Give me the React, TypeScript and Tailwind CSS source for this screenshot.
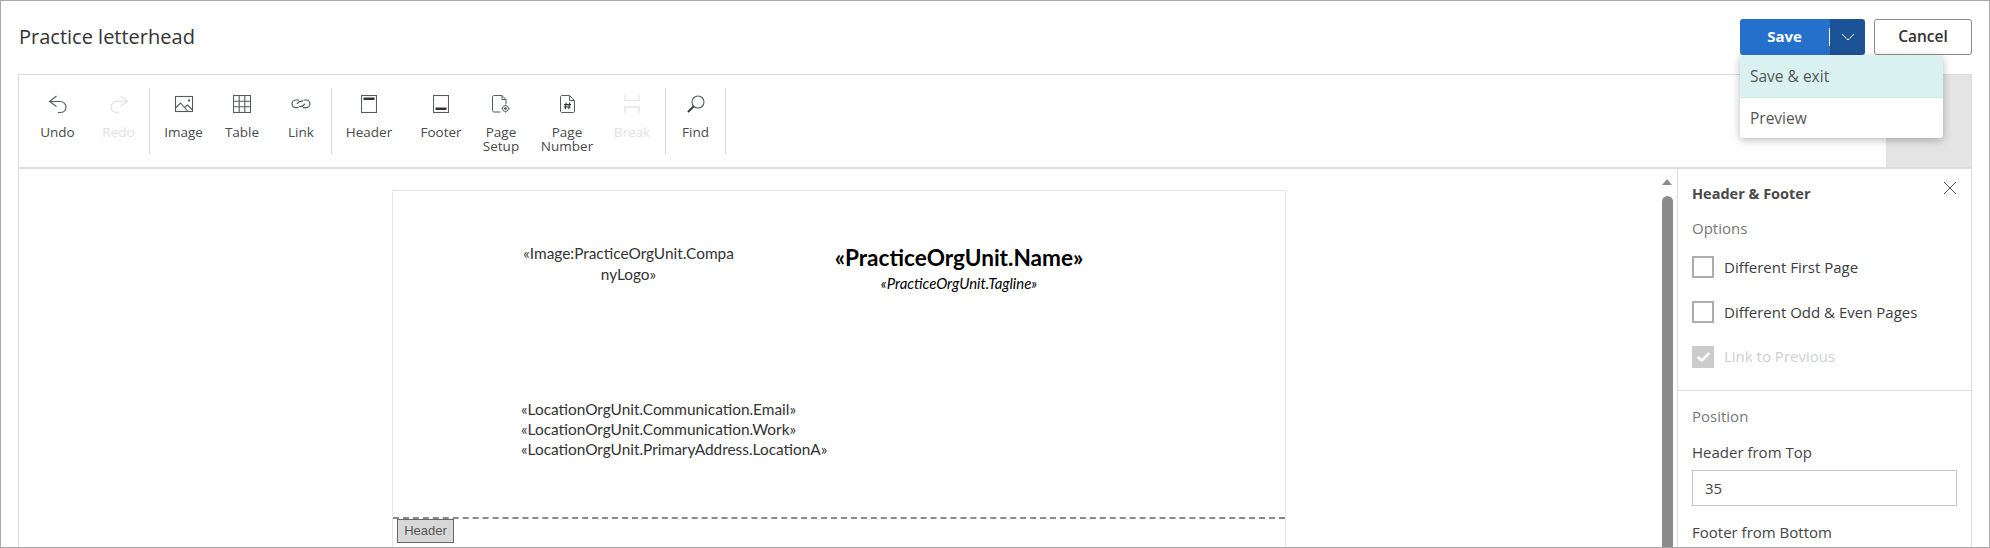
import React from 'react'
import { Check } from 'lucide-react'

const stroke = '#555b61'

const icons: Record<string, React.ReactNode> = {
  undo: (
    <svg width="20" height="20" viewBox="0 0 20 20" fill="none" stroke={stroke} strokeWidth="1.1">
      <path d="M8.5 2 L1.5 7.5 L8.5 12.5" />
      <path d="M1.5 7.5 H12 C15.5 7.5 18 10 18 13.2 C18 16.4 15.5 18.5 12 18.5 H10" />
    </svg>
  ),
  redo: (
    <svg width="20" height="20" viewBox="0 0 20 20" fill="none" stroke="#e4e4e4" strokeWidth="1.4">
      <path d="M11.5 2 L18.5 7.5 L11.5 12.5" />
      <path d="M18.5 7.5 H8 C4.5 7.5 2 10 2 13.2 C2 16.4 4.5 18.5 8 18.5 H10" />
    </svg>
  ),
  image: (
    <svg width="20" height="18" viewBox="0 0 20 18" fill="none" stroke={stroke} strokeWidth="1.1">
      <rect x="1.5" y="1.5" width="17" height="15" />
      <path d="M1.5 13 L6.5 8 L14 16.5 M10.5 12.5 L13.5 10 L18.5 15" />
      <circle cx="15" cy="5.5" r="0.6" />
    </svg>
  ),
  table: (
    <svg width="18" height="18" viewBox="0 0 18 18" fill="none" stroke={stroke} strokeWidth="1.1">
      <rect x="0.5" y="0.5" width="17" height="17" />
      <path d="M6.2 0.5 V17.5 M11.8 0.5 V17.5 M0.5 6.2 H17.5 M0.5 11.8 H17.5" />
    </svg>
  ),
  link: (
    <svg width="20" height="12" viewBox="0 0 20 12" fill="none" stroke={stroke} strokeWidth="1.2">
      <path d="M8 2 H5 C2.8 2 1 3.6 1 5.8 C1 8 2.8 9.6 5 9.6 H7.5" />
      <path d="M12 9.6 H15 C17.2 9.6 19 8 19 5.8 C19 3.6 17.2 2 15 2 H12.5" />
      <path d="M6 5.8 C7.5 3.5 10 3 12 3.2 M14 5.8 C12.5 8 10 8.8 8 8.4" />
    </svg>
  ),
  header: (
    <svg width="16" height="18" viewBox="0 0 16 18" fill="none" stroke={stroke} strokeWidth="1.1">
      <rect x="0.5" y="0.5" width="15" height="17" />
      <rect x="2.5" y="2.5" width="11" height="2.5" fill="#333" stroke="none" />
    </svg>
  ),
  footer: (
    <svg width="16" height="18" viewBox="0 0 16 18" fill="none" stroke={stroke} strokeWidth="1.1">
      <rect x="0.5" y="0.5" width="15" height="17" />
      <rect x="2.5" y="12.5" width="11" height="2.5" fill="#333" stroke="none" />
    </svg>
  ),
  setup: (
    <svg width="18" height="18" viewBox="0 0 18 18" fill="none" stroke={stroke} strokeWidth="1">
      <path d="M8.5 17 H2 C1 17 0.5 16.4 0.5 15.5 V2 C0.5 1 1 0.5 2 0.5 H10 L14 4.5 V9" />
      <path d="M10 0.5 V4.5 H14" />
      <circle cx="13.5" cy="13.5" r="3" />
      <circle cx="13.5" cy="13.5" r="1" fill={stroke} />
      <path d="M13.5 9.5 V10.5 M13.5 16.5 V17.5 M9.5 13.5 H10.5 M16.5 13.5 H17.5" />
    </svg>
  ),
  number: (
    <svg width="15" height="18" viewBox="0 0 15 18" fill="none" stroke={stroke} strokeWidth="1">
      <path d="M9.5 0.5 H2 C1 0.5 0.5 1 0.5 2 V16 C0.5 17 1 17.5 2 17.5 H13 C14 17.5 14.5 17 14.5 16 V5.5 Z" />
      <path d="M9.5 0.5 V5.5 H14.5" />
      <path d="M6.2 7.5 L5.4 14 M9.6 7.5 L8.8 14 M4 9.6 H11 M3.6 12 H10.6" strokeWidth="1.1" stroke="#333" />
    </svg>
  ),
  pageBreak: (
    <svg width="16" height="18" viewBox="0 0 16 18" fill="none" stroke="#e4e4e4" strokeWidth="1.4">
      <path d="M1 0 V5.5 H15 V0 M1 18 V12 H15 V18" />
    </svg>
  ),
  find: (
    <svg width="18" height="18" viewBox="0 0 18 18" fill="none" stroke={stroke} strokeWidth="1.1">
      <circle cx="11" cy="7" r="6" />
      <path d="M6.6 11.4 L1 17" strokeWidth="2" stroke="#333" />
    </svg>
  ),
}

const ToolButton = ({
  icon,
  label,
  width,
  disabled
}: {
  icon: string
  label: string[]
  width: string
  disabled?: boolean
}) => (
  <button
    className={`${width} flex flex-col items-center pt-[7px] text-[13.5px] leading-[14px] ${
      disabled ? 'text-[#e2e2e2]' : 'text-[#4a4a4a]'
    }`}
  >
    <span className="h-[18px] flex items-center justify-center">{icons[icon]}</span>
    <span className="mt-[12px]">
      {label.map(line => (
        <span key={line} className="block">
          {line}
        </span>
      ))}
    </span>
  </button>
)

const Divider = () => <div className="w-px h-[66px] bg-[#d9d9d9]" />

const CheckRow = ({ label }: { label: string }) => (
  <label className="flex items-center h-[22px] gap-[10px] text-[15px] text-[#3c3c3c]">
    <span className="w-[22px] h-[22px] border-2 border-[#adadad] bg-white" />
    {label}
  </label>
)

export default function App() {
  return (
    <div className="relative h-[548px] overflow-hidden border border-[#a8a8a8] bg-white pr-[17px] font-['Open_Sans',sans-serif]">
      {/* Top bar */}
      <div className="flex items-center justify-between h-[73px] pl-[18px] pb-[3px] pt-[1px]">
        <h1 className="text-[20px] text-[#333]">Practice letterhead</h1>
        <div className="flex gap-[9px]">
          <div className="relative flex w-[125px] h-[36px] rounded-[3px] overflow-hidden text-white text-[15px] font-bold">
            <button className="w-[90px] bg-[#2470cb] pr-[1px]">Save</button>
            <button className="flex-1 bg-[#1c5296] flex items-center justify-center">
              <svg width="14" height="8" viewBox="0 0 14 8" fill="none" stroke="#fff" strokeWidth="1">
                <path d="M1 1 L7 7 L13 1" />
              </svg>
            </button>
            <span className="absolute left-[89px] top-[9px] w-px h-[18px] bg-white" />
          </div>
          <button className="w-[98px] h-[36px] rounded-[3px] border border-[#8c8c8c] bg-white text-[15.5px] font-semibold text-[#333]">
            Cancel
          </button>
        </div>
      </div>

      {/* Save menu */}
      <div className="absolute z-10 left-[1739px] top-[55px] w-[203px] h-[82px] rounded-b-[3px] bg-white shadow-[0_2px_8px_rgba(0,0,0,0.28)] text-[15.5px] text-[#555] overflow-hidden">
        <div className="h-[42px] flex items-center px-[10px] bg-[#d9f2f1] border-b border-[#d3e8e6]">Save &amp; exit</div>
        <div className="h-[40px] flex items-center px-[10px] pt-[2px]">Preview</div>
      </div>

      <div className="ml-[17px] h-[474px] border border-[#dcdcdc] border-b-0">
        {/* Toolbar */}
        <div className="flex h-[94px] border-b-2 border-[#dedede]">
          <div className="flex items-start pt-[13px] pl-[8px]">
            <ToolButton icon="undo" label={['Undo']} width="w-[61px]" />
            <ToolButton icon="redo" label={['Redo']} width="w-[61px]" disabled />
            <Divider />
            <div className="w-[4px]" />
            <ToolButton icon="image" label={['Image']} width="w-[59px]" />
            <ToolButton icon="table" label={['Table']} width="w-[58px]" />
            <ToolButton icon="link" label={['Link']} width="w-[60px]" />
            <Divider />
            <ToolButton icon="header" label={['Header']} width="w-[74px]" />
            <ToolButton icon="footer" label={['Footer']} width="w-[70px]" />
            <ToolButton icon="setup" label={['Page', 'Setup']} width="w-[50px]" />
            <ToolButton icon="number" label={['Page', 'Number']} width="w-[82px]" />
            <ToolButton icon="pageBreak" label={['Break']} width="w-[48px]" disabled />
            <div className="w-[9px]" />
            <Divider />
            <ToolButton icon="find" label={['Find']} width="w-[59px]" />
            <Divider />
          </div>
          <div className="ml-auto w-[85px] bg-[#e4e4e4]" />
        </div>

        {/* Editor */}
        <div className="flex h-[380px]">
          <div className="flex-1 min-w-0 pl-[373px] pt-[21px] overflow-hidden font-['Lato',sans-serif] text-[#333]">
            <div className="relative w-[894px] h-[400px] border border-[#e6e6e6]">
              <div className="flex pt-[51px] h-[208px]">
                <div className="mt-[1px] ml-[129px] w-[213px] text-center text-[15.4px] leading-[21px] whitespace-nowrap">
                  «Image:PracticeOrgUnit.Compa
                  <br />
                  nyLogo»
                </div>
                <div className="ml-[78px] w-[292px] text-center text-black">
                  <div className="mt-[3px] text-[22.6px] leading-[26px] font-bold">«PracticeOrgUnit.Name»</div>
                  <div className="mt-[3px] text-[14.9px] leading-[18px] italic">«PracticeOrgUnit.Tagline»</div>
                </div>
              </div>
              <div className="ml-[128px] text-[15.4px] leading-[20px]">
                <div>«LocationOrgUnit.Communication.Email»</div>
                <div>«LocationOrgUnit.Communication.Work»</div>
                <div>«LocationOrgUnit.PrimaryAddress.LocationA»</div>
              </div>
              {/* Header boundary */}
              <div className="absolute left-0 right-0 top-[326px] border-t-2 border-dashed border-[#8a8a8a]" />
              <div className="absolute left-[4px] top-[328px] w-[57px] h-[24px] border border-[#666] bg-[#d8d8d8] text-center font-['Liberation_Sans',sans-serif] text-[13px] leading-[22px] text-[#555]">
                Header
              </div>
            </div>
          </div>

          {/* Scrollbar */}
          <div className="w-[19px] pl-[4px] shrink-0">
            <div className="mt-[10px] w-0 h-0 border-x-[5.5px] border-x-transparent border-b-[6px] border-b-[#8c8c8c]" />
            <div className="mt-[11px] w-[11px] h-[400px] rounded-t-[6px] bg-[#8c8c8c]" />
          </div>

          {/* Side panel */}
          <aside className="w-[294px] shrink-0 border-l border-[#dcdcdc] text-[15px]">
            <div className="relative px-[14px] pt-[15px] pb-[22px] border-b border-[#dcdcdc]">
              <h2 className="font-bold text-[14.5px] leading-[20px] text-[#4a4a4a]">Header &amp; Footer</h2>
              <svg className="absolute right-[14px] top-[12px]" width="14" height="14" viewBox="0 0 14 14" fill="none" stroke="#555" strokeWidth="1">
                <path d="M1 1 L13 13 M13 1 L1 13" />
              </svg>
              <div className="mt-[14px] leading-[20px] text-[#777]">Options</div>
              <div className="mt-[18px] flex flex-col gap-[23px]">
                <CheckRow label="Different First Page" />
                <CheckRow label="Different Odd & Even Pages" />
                <label className="flex items-center h-[22px] gap-[10px] text-[#cfcfcf]">
                  <span className="w-[22px] h-[22px] flex items-center justify-center bg-[#cccccc]">
                    <Check size={15} strokeWidth={4} color="#fff" />
                  </span>
                  <span className="mb-[2px]">Link to Previous</span>
                </label>
              </div>
            </div>
            <div className="px-[14px] pt-[15px]">
              <div className="leading-[20px] text-[#777]">Position</div>
              <div className="mt-[16px] leading-[20px] text-[#444]">Header from Top</div>
              <div className="mt-[8px] h-[36px] border border-[#c8c8c8] pl-[12px] flex items-center text-[#444]">35</div>
              <div className="mt-[16px] leading-[20px] text-[#444]">Footer from Bottom</div>
            </div>
          </aside>
        </div>
      </div>
    </div>
  )
}
